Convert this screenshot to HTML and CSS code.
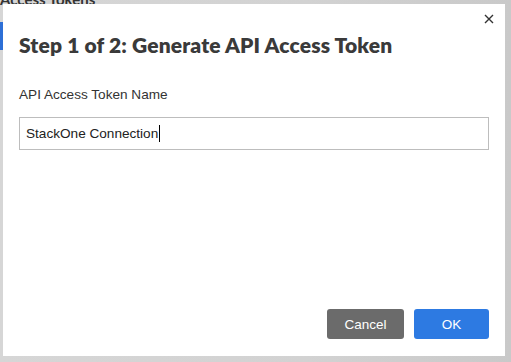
FILE: index.html
```html
<!DOCTYPE html>
<html>
<head>
<meta charset="utf-8">
<link rel="stylesheet" href="styles.css">
</head>
<body>
<div class="page">
  <div class="bg-title">Access Tokens</div>
  <div class="bg-tab"></div>
  <div class="modal">
    <button class="close" aria-label="Close">
      <svg width="10" height="10" viewBox="0 0 10 10"><path d="M1 1L9 9M9 1L1 9" stroke="#333" stroke-width="1.4" fill="none"/></svg>
    </button>
    <h1 class="title">Step 1 of 2: Generate API Access Token</h1>
    <div class="body">
      <label class="label">API Access Token Name</label>
      <div class="input"><span>StackOne Connection</span><span class="caret"></span></div>
    </div>
    <div class="footer">
      <button class="btn cancel">Cancel</button>
      <button class="btn ok">OK</button>
    </div>
  </div>
</div>
</body>
</html>
```
FILE: styles.css
```css
html, body {
  margin: 0;
  padding: 0;
  width: 511px;
  height: 362px;
  overflow: hidden;
  font-family: "Liberation Sans", Arial, sans-serif;
}
.page {
  position: relative;
  width: 511px;
  height: 362px;
  background: linear-gradient(90deg, #d6d6d6 0%, #d2d2d2 60%, #c9c9c9 100%);
  padding: 4px 6px 6px 3px;
  box-sizing: border-box;
}
.bg-title {
  position: absolute;
  left: 0;
  top: -10px;
  font-family: "Lato", sans-serif;
  font-weight: 700;
  font-size: 15px;
  line-height: 18px;
  color: #333;
}
.bg-tab {
  position: absolute;
  left: 0;
  top: 22px;
  width: 3px;
  height: 28px;
  background: #2d6fd6;
}
.modal {
  position: relative;
  background: #fff;
  height: 352px;
  display: flex;
  flex-direction: column;
  box-sizing: border-box;
  padding: 0 16px 17px 16px;
}
.close {
  position: absolute;
  right: 11px;
  top: 10px;
  border: 0;
  background: none;
  padding: 0;
  width: 10px;
  height: 10px;
  display: flex;
}
.title {
  margin: 28px 0 0 0;
  font-family: "Lato", sans-serif;
  font-weight: 800;
  font-size: 21px;
  line-height: 26px;
  color: #3a3a3a;
  letter-spacing: 0.15px;
}
.body {
  display: flex;
  flex-direction: column;
  margin-top: 29px;
}
.label {
  font-size: 13.6px;
  color: #333;
  line-height: 16px;
}
.input {
  margin-top: 14px;
  height: 33px;
  border: 1px solid #bdbdbd;
  box-sizing: border-box;
  display: flex;
  align-items: center;
  padding-left: 6px;
  font-size: 13.6px;
  color: #222;
}
.caret {
  display: inline-block;
  width: 1px;
  height: 17px;
  background: #000;
  margin-left: 1px;
}
.footer {
  margin-top: auto;
  display: flex;
  justify-content: flex-end;
  gap: 10px;
}
.btn {
  height: 30px;
  border: 0;
  border-radius: 3px;
  color: #fff;
  font-family: "Liberation Sans", Arial, sans-serif;
  font-size: 13.5px;
  padding: 0;
}
.cancel {
  width: 77px;
  background: #6b6b6b;
}
.ok {
  width: 75px;
  background: #2d7ae2;
}
```
